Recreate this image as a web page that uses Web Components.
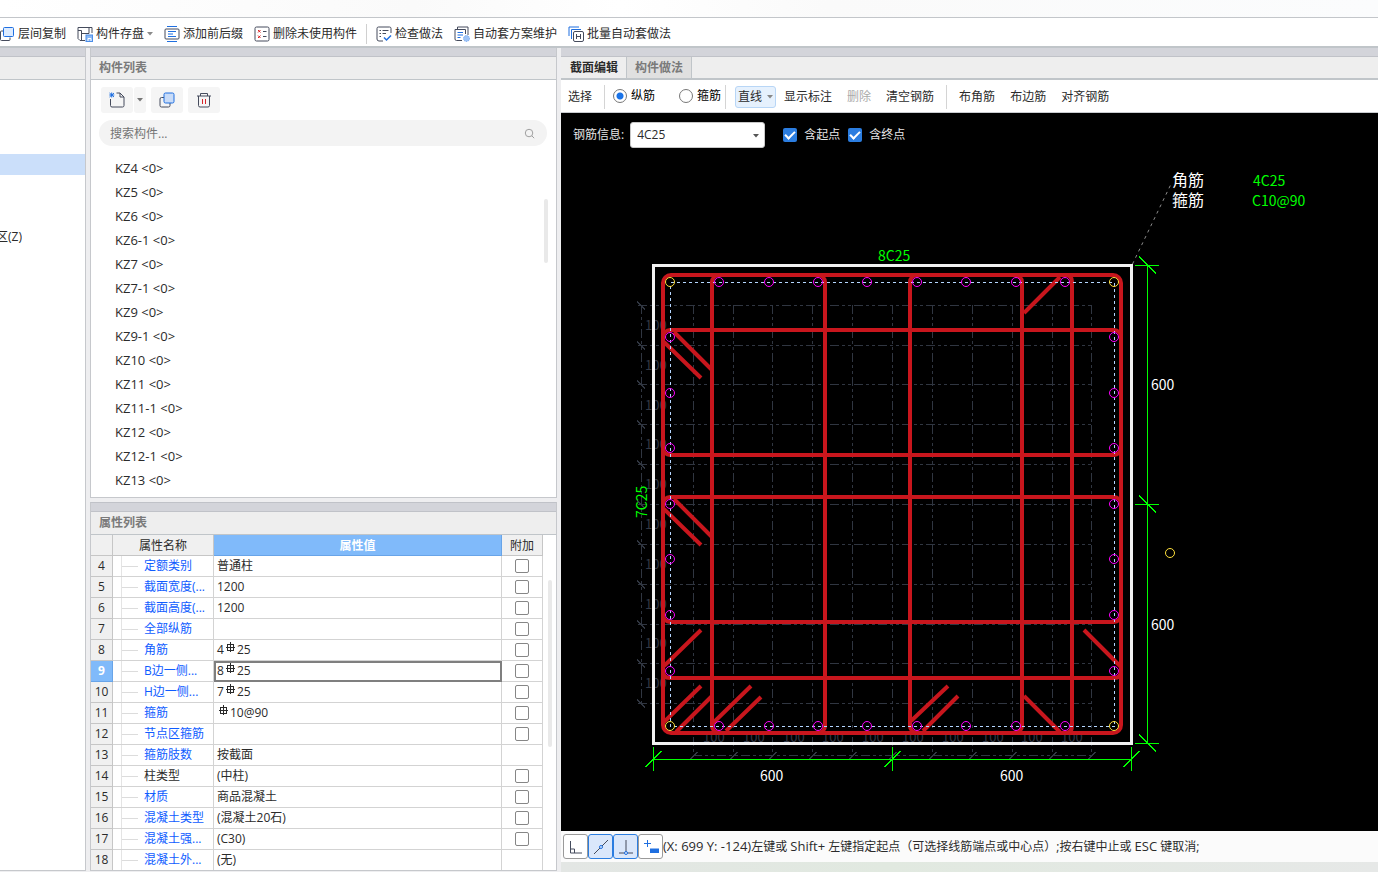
<!DOCTYPE html>
<html lang="zh-CN">
<head>
<meta charset="utf-8">
<title>构件定义</title>
<style>
  html, body {
    margin: 0;
    height: 100%;
  }
  body {
    font: 12px/16px "Open Sans", "Noto Sans CJK SC", sans-serif;
    color: #2b2b2b;
    background: #eeeef0;
    overflow: hidden;
  }
</style>
</head>
<body>
<define-window></define-window>

<script>
  // styles shared by every shadow root
  const base = `
    * { box-sizing: border-box; }
    button, input, select {
      font: inherit;
      color: inherit;
      margin: 0;
      padding: 0;
      border: 0;
      background: none;
    }
    button { white-space: nowrap; }
    svg { display: block; flex: none; }
  `;

  const BLUE = '#1f6fe0';
  const DARK = '#454b5c';

  const icons = {
    layers: `<path d="M4.5 5H2.500Q1.500 5 1.500 6V13.500Q1.500 14.500 2.500 14.500H10Q11 14.500 11 13.500V11.500" stroke="${DARK}"/><rect x="4.500" y="1.500" width="10" height="9" rx="1" fill="#dcebff" stroke="${BLUE}"/>`,
    save: `<path d="M8 14.500H3L1 12.500V1.500H15V7M4.500 14V4.500M4.500 7.500H12M12 1.500V7.500M1 4.500H4.500" stroke="${DARK}"/><rect x="9" y="9" width="6.500" height="6.500" fill="#8ab8f5" stroke="#4c8ee8"/><path d="M11 15V12.500H14V15" stroke="#fff"/>`,
    affix: `<path d="M3 .5H13M3 15.500H13" stroke="${BLUE}"/><rect x="1" y="3" width="14" height="10" rx="1" stroke="${DARK}"/><path d="M4 5.500H12M4 8H9M4 10.500H12" stroke="${BLUE}"/>`,
    unused: `<rect x="1" y="1" width="14" height="14" rx="1.500" stroke="${DARK}"/><path d="M4 4L6.500 6.500M6.500 4L4 6.500M4 9.500L6.500 12M6.500 9.500L4 12" stroke="#d22"/><path d="M9 5.500H12.500M9 10.500H12.500" stroke="${DARK}"/>`,
    check: `<path d="M7 15H3Q1 15 1 13V2.500Q1 1 2.500 1H13.500Q15 1 15 2.500V7M3.500 4.500H5M6.500 4.500H12.500M3.500 7.500H5M6.500 7.500H10M3.500 10.500H5" stroke="${DARK}"/><path d="M8 11.500L10.500 14L15 9.500" stroke="${BLUE}" stroke-width="1.500"/>`,
    scheme: `<path d="M3.500 3V1H14V9M8 14.500H2.500Q1 14.500 1 13V3.500H11.500V8" stroke="${DARK}"/><path d="M3.500 6.500H9M3.500 9H9M3.500 11.500H6.500" stroke="${BLUE}"/><circle cx="12.500" cy="12.500" r="3" fill="#9dc3f7" stroke="#6aa2ee" stroke-dasharray="1 1"/>`,
    batch: `<path d="M1 10V1H11M3.500 13V3.500H13" stroke="${BLUE}"/><rect x="5.500" y="5.500" width="10" height="10" rx="1.500" fill="#fff" stroke="${DARK}"/><path d="M8.500 8V13M12.500 8V13M8.500 10.500H12.500" stroke="${DARK}"/>`,
    create: `<path d="M1.500 7V13.500Q1.500 15 3 15H13.500Q15 15 15 13.500V5L11 1H7.500M11 1V5H15" stroke="${DARK}"/><path d="M.5 1L5 5M5 1L.5 5M2.700 .5V5.500M.3 3H5.300" stroke="${BLUE}"/>`,
    copy: `<path d="M5 5.500H2.500Q1 5.500 1 7V13.500Q1 15 2.500 15H9.500Q11 15 11 13.500V11" stroke="${DARK}"/><rect x="5" y="1" width="10" height="10" rx="1.500" fill="#c9dcf8" stroke="${BLUE}"/>`,
    trash: `<path d="M1 4H15M4.500 4V1.500H11.500V4M2.500 4V13.500Q2.500 15 4 15H12Q13.500 15 13.500 13.500V4" stroke="${DARK}"/><path d="M6.500 7V12M9.500 7V12" stroke="#d8232a"/>`,
    search: `<circle cx="7.500" cy="7.500" r="4" stroke="#999"/><path d="M10.500 10.500L13 13" stroke="#999"/>`,
    angle: `<path d="M2.500 2V14H14M2.500 10H6.500V14" stroke="${DARK}"/>`,
    line: `<path d="M1 15L15 1" stroke="${DARK}"/><circle cx="8" cy="8" r="1.500" fill="#dcebff" stroke="${BLUE}"/>`,
    perp: `<path d="M8 1V13M1 14H15" stroke="${DARK}"/><circle cx="8" cy="14" r="1.500" fill="#dcebff" stroke="${BLUE}"/>`,
    dynamic: `<path d="M1 4.500H8M4.500 1V8" stroke="${BLUE}"/><path d="M7 9.500H16V14H7Z" fill="${BLUE}"/>`
  };

  function icon(name, size = 16) {
    return `<svg width="${size}" height="${size}" viewBox="0 0 16 16" fill="none" aria-hidden="true">${icons[name]}</svg>`;
  }

  const caret = '<svg class="caret" width="6" height="4" viewBox="0 0 6 4" aria-hidden="true"><path d="M0 0H6L3 3.500Z" fill="currentColor"/></svg>';

  function range(n) {
    return Array.from({length: n}, (v, i) => i);
  }

  class BaseElement extends HTMLElement {
    constructor() {
      super();
      this.attachShadow({mode: 'open'});
    }

    connectedCallback() {
      const template = document.createElement('template');
      template.innerHTML = `<style>${base}</style>` + this.render();
      this.shadowRoot.replaceChildren(template.content.cloneNode(true));
    }
  }


  class ToolItem extends BaseElement {
    render() {
      return `
        <style>
          :host { display: block; flex: none; }
          button { display: flex; align-items: center; gap: 3px; height: 24px; }
          .caret { color: #8a8a8a; }
        </style>
        <button type="button">
          ${icon(this.getAttribute('icon'))}
          <slot></slot>
          ${this.hasAttribute('menu') ? caret : ''}
        </button>
      `;
    }
  }


  class MainToolbar extends BaseElement {
    render() {
      return `
        <style>
          :host {
            display: flex;
            align-items: center;
            gap: 11px;
            height: 31px;
            padding-top: 3px;
            border-top: 1px solid #c3c6ca;
            border-bottom: 2px solid #c0c5c9;
            background: #fff;
            overflow: hidden;
          }
          .first { margin-left: -1px; }
          i { width: 1px; height: 20px; margin: 0 -2px; background: #d0d0d0; }
        </style>
        <tool-item class="first" icon="layers">层间复制</tool-item>
        <tool-item icon="save" menu>构件存盘</tool-item>
        <tool-item icon="affix">添加前后缀</tool-item>
        <tool-item icon="unused">删除未使用构件</tool-item>
        <i></i>
        <tool-item icon="check">检查做法</tool-item>
        <tool-item icon="scheme">自动套方案维护</tool-item>
        <tool-item icon="batch">批量自动套做法</tool-item>
      `;
    }
  }


  class DockPanel extends BaseElement {
    render() {
      return `
        <style>
          :host {
            display: flex;
            flex-direction: column;
            min-height: 0;
            border: 1px solid #c6c8cc;
            border-top: 0;
            background: #fff;
          }
          .grip { height: 9px; background: #d3d4da; border-bottom: 1px solid #c0c2c8; }
          header {
            height: 23px;
            padding: 3px 8px;
            border-bottom: 1px solid #c0c5c9;
            background: #eee;
            color: #7a7a7a;
            font-weight: bold;
          }
          .body { flex: 1; display: flex; flex-direction: column; min-height: 0; }
        </style>
        <div class="grip"></div>
        <header>${this.getAttribute('heading') || ''}</header>
        <div class="body"><slot></slot></div>
      `;
    }
  }


  class ModuleTree extends BaseElement {
    render() {
      return `
        <style>
          :host { display: block; padding-top: 74px; }
          a {
            display: flex;
            align-items: center;
            height: 21px;
            margin-bottom: 3px;
            color: inherit;
            text-decoration: none;
            white-space: nowrap;
          }
          a.current { background: #cbdffa; }
          span { width: 22px; display: flex; justify-content: flex-end; overflow: hidden; }
        </style>
        <a class="current" href="#" aria-label="柱"></a>
        <a href="#" aria-label="构件"></a>
        <a href="#" aria-label="构件"></a>
        <a href="#"><span>区(Z)</span></a>
      `;
    }
  }


  class ComponentList extends BaseElement {
    render() {
      const names = ['KZ4', 'KZ5', 'KZ6', 'KZ6-1', 'KZ7', 'KZ7-1', 'KZ9', 'KZ9-1',
        'KZ10', 'KZ11', 'KZ11-1', 'KZ12', 'KZ12-1', 'KZ13'];
      return `
        <style>
          :host { display: flex; flex-direction: column; flex: 1; min-height: 0; padding: 7px 9px 0 8px; position: relative; }
          .tools { display: flex; padding-left: 2px; margin-bottom: 7px; }
          .tools button {
            display: flex;
            align-items: center;
            justify-content: center;
            width: 32px;
            height: 26px;
            margin-right: 5px;
            border-radius: 3px;
            background: #f5f5f5;
          }
          .tools .new { margin-right: 1px; }
          .tools .more { width: 12px; color: #777; }
          .search {
            display: flex;
            align-items: center;
            height: 26px;
            padding: 0 10px 0 11px;
            border-radius: 13px;
            background: #f3f3f3;
          }
          .search input { flex: 1; min-width: 0; padding-top: 2px; outline: 0; }
          .search input::placeholder { color: #757575; opacity: 1; }
          ul { flex: 1; margin: 10px 0 0; padding: 0; list-style: none; overflow: hidden; }
          li { padding: 4px 16px; height: 24px; font-size: 13px; }
          .thumb { position: absolute; right: 8px; top: 119px; width: 4px; height: 64px; border-radius: 2px; background: #e9e9e9; }
        </style>
        <div class="tools">
          <button class="new" type="button" aria-label="新建">${icon('create')}</button>
          <button class="more" type="button" aria-label="新建选项">${caret}</button>
          <button type="button" aria-label="复制">${icon('copy')}</button>
          <button type="button" aria-label="删除">${icon('trash')}</button>
        </div>
        <label class="search">
          <input type="text" placeholder="搜索构件..." aria-label="搜索构件">
          ${icon('search', 15)}
        </label>
        <ul>${names.map(name => `<li>${name} &lt;0&gt;</li>`).join('')}</ul>
        <div class="thumb"></div>
      `;
    }
  }


  // HRB400 bar mark, drawn since no installed font has it
  const bar = `<svg class="bar" width="11" height="11" viewBox="0 0 11 11" fill="none" stroke="#2b2b2b" aria-hidden="true">
    <path d="M5.500 0V10M2 2.500H9M1 5.500H10M2 8.500H9M2.500 2.500V8M8.500 2.500V8"/></svg>`;

  const properties = [
    [4, '定额类别', '普通柱'],
    [5, '截面宽度(...', '1200'],
    [6, '截面高度(...', '1200'],
    [7, '全部纵筋', ''],
    [8, '角筋', `4${bar}25`],
    [9, 'B边一侧...', `8${bar}25`],
    [10, 'H边一侧...', `7${bar}25`],
    [11, '箍筋', `${bar}10@90`],
    [12, '节点区箍筋', ''],
    [13, '箍筋肢数', '按截面'],
    [14, '柱类型', '(中柱)'],
    [15, '材质', '商品混凝土'],
    [16, '混凝土类型', '(混凝土20石)'],
    [17, '混凝土强...', '(C30)'],
    [18, '混凝土外...', '(无)']
  ];

  class PropertyTable extends BaseElement {
    row([no, name, value]) {
      const noCheck = no === 13 || no === 18;
      const id = `add-${no}`;
      return `
        <tr class="${no === 9 ? 'active' : ''}">
          <th scope="row">${no}</th>
          <td class="name ${no === 14 ? 'plain' : ''}"><span>${name}</span></td>
          <td class="value">${value}</td>
          <td class="add">${noCheck ? '' : `<input type="checkbox" id="${id}" aria-label="附加 ${name}">`}</td>
        </tr>
      `;
    }

    render() {
      return `
        <style>
          :host { display: block; padding-right: 13px; position: relative; overflow: hidden; flex: 1; }
          table { width: 100%; table-layout: fixed; border-collapse: separate; border-spacing: 0; }
          col.no { width: 22px; }
          col.name { width: 101px; }
          col.add { width: 41px; }
          th, td {
            height: 21px;
            padding: 0;
            border-right: 1px solid #d3d3d3;
            border-bottom: 1px solid #d3d3d3;
            font-weight: normal;
            text-align: left;
            white-space: nowrap;
            overflow: hidden;
          }
          th { background: #f0f0f0; text-align: center; border-color: #c6c6c6; }
          thead th { padding-top: 1px; }
          thead th.value { background: #80bafa; color: #fff; font-weight: bold; border-color: #68a4e8; }
          td.name { padding-left: 8px; color: #0f5cff; }
          td.name span {
            display: flex;
            align-items: center;
            gap: 6px;
            height: 20px;
            border-left: 1px solid #e4e4e4;
          }
          td.name span::before { content: ""; width: 16px; height: 1px; background: #dcdcdc; }
          td.plain { color: #2b2b2b; }
          td.value { padding-left: 3px; }
          .bar { display: inline-block; vertical-align: 1px; margin: 0 1px; }
          .active th { background: #80bafa; color: #fff; font-weight: bold; border-color: #68a4e8; }
          .active td.value { outline: 2px solid #7f7f7f; outline-offset: -2px; }
          td.add { text-align: center; }
          td.add input {
            display: block;
            appearance: none;
            width: 14px;
            height: 14px;
            margin: 0 auto;
            border: 1px solid #868686;
            border-radius: 2px;
            background: #fff;
          }
          .thumb { position: absolute; right: 4px; top: 45px; width: 4px; height: 167px; border-radius: 2px; background: #e9e9e9; }
        </style>
        <table>
          <colgroup><col class="no"><col class="name"><col><col class="add"></colgroup>
          <thead>
            <tr><th></th><th scope="col">属性名称</th><th class="value" scope="col">属性值</th><th scope="col">附加</th></tr>
          </thead>
          <tbody>${properties.map(this.row).join('')}</tbody>
        </table>
        <div class="thumb"></div>
      `;
    }
  }


  class SectionToolbar extends BaseElement {
    render() {
      return `
        <style>
          :host {
            display: flex;
            align-items: center;
            gap: 15px;
            height: 33px;
            padding: 2px 7px 0;
            border-bottom: 1px solid #c9ccd0;
            background: #fff;
          }
          i { width: 1px; height: 24px; margin: 0 -3px; background: #d4d4d4; }
          .types { display: flex; gap: 24px; margin: 0 -8px 0 -4px; padding-bottom: 2px; color: #000; }
          label { display: flex; align-items: center; gap: 4px; }
          input {
            appearance: none;
            width: 14px;
            height: 14px;
            border: 1px solid #777;
            border-radius: 50%;
            background: #fff;
          }
          input:checked { background: radial-gradient(#1a73e8 3px, #fff 4px); }
          .drop {
            display: flex;
            align-items: center;
            gap: 5px;
            height: 22px;
            padding: 0 2px;
            margin: 0 -7px 0 -3px;
            border: 1px solid #b8d6f6;
            border-radius: 3px;
            background: #e6f1fd;
          }
          .caret { color: #888; }
          button:disabled { color: #aaa; }
        </style>
        <button type="button">选择</button>
        <i></i>
        <div class="types">
          <label><input type="radio" name="type" checked>纵筋</label>
          <label><input type="radio" name="type">箍筋</label>
        </div>
        <i></i>
        <button class="drop" type="button">直线${caret}</button>
        <button type="button">显示标注</button>
        <button type="button" disabled>删除</button>
        <button type="button">清空钢筋</button>
        <i></i>
        <button type="button">布角筋</button>
        <button type="button">布边筋</button>
        <button type="button">对齐钢筋</button>
      `;
    }
  }


  class BarOptions extends BaseElement {
    render() {
      return `
        <style>
          :host {
            display: flex;
            align-items: center;
            height: 44px;
            padding-left: 12px;
            color: #e6e6e6;
          }
          .field { position: relative; margin: 0 18px 0 6px; color: #2b2b2b; }
          select {
            appearance: none;
            display: block;
            width: 135px;
            height: 26px;
            padding: 0 6px;
            border: 1px solid #c8c8c8;
            border-radius: 3px;
            background: #fff;
          }
          .caret { position: absolute; right: 6px; top: 12px; color: #555; }
          .check { display: flex; align-items: center; gap: 7px; margin-right: 8px; }
          .check input {
            appearance: none;
            display: grid;
            place-items: center;
            width: 14px;
            height: 14px;
            border-radius: 2px;
            background: #2b7de0;
          }
          .check input::before {
            content: "";
            width: 8px;
            height: 4px;
            margin-bottom: 3px;
            border: solid #fff;
            border-width: 0 0 2px 2px;
            transform: rotate(-45deg);
          }
        </style>
        <label for="bar-info">钢筋信息:</label>
        <div class="field">
          <select id="bar-info"><option>4C25</option></select>
          ${caret}
        </div>
        <label class="check"><input type="checkbox" checked>含起点</label>
        <label class="check"><input type="checkbox" checked>含终点</label>
      `;
    }
  }


  class SectionDrawing extends BaseElement {
    render() {
      const xs = [693.5, 733.5, 772.5, 812.5, 852.5, 892.5, 932.5, 972.5, 1012.5, 1052.5, 1091.5];
      const ys = [305.5, 345.5, 384.5, 424.5, 464.5, 504.5, 544.5, 584.5, 624.5, 663.5, 703.5];
      const barX = [719, 769, 818, 867, 917, 966, 1016, 1065];
      const barY = [337, 393, 448, 504, 559, 615, 671];
      const circle = (x, y) => `<circle cx="${x}" cy="${y}" r="4.500"/>`;

      const grid = xs.map(x => `M${x} 305V757`).join('') + ys.map(y => `M638 ${y}H1092`).join('');
      const ticks = xs.map(x => `M${x - 4} 760l8 -8`).join('') + ys.map(y => `M637 ${y - 4}l8 8`).join('');
      const small = range(10).map(i =>
        `<text x="645" y="${330 + Math.round(i * 39.8)}">100</text>` +
        `<text x="${703 + Math.round(i * 39.8)}" y="742">100</text>`).join('');

      return `
        <style>
          :host { display: block; flex: 1; min-height: 0; }
          svg { width: 100%; height: 100%; }
          text { font: 14px "Noto Sans CJK SC", sans-serif; }
          .cjk { font: 16px "Liberation Sans", "Noto Sans CJK SC", sans-serif; }
          .small { font-size: 13px; }
          .small text { font-size: inherit; }
        </style>
        <svg viewBox="561 157 817 674" preserveAspectRatio="xMinYMin meet" fill="none" role="img" aria-label="柱截面配筋图">
          <g shape-rendering="crispEdges">
            <path d="${grid}M641.500 305V704M693 755.500H1092" stroke="#303641" stroke-dasharray="9 3 3 3 3 3"/>
            <path d="${ticks}" stroke="#303641"/>
          </g>
          <g class="small" fill="#343945">${small}</g>
          <path d="M653.500 265.500H1131.500V743.500H653.500Z" stroke="#f2f2f2" stroke-width="3"/>

          <!-- stirrups -->
          <g stroke="#c8161d" stroke-width="4">
            <rect x="663" y="275" width="458" height="458" rx="8"/>
            <rect x="712" y="275" width="113" height="458" rx="7"/>
            <rect x="910" y="275" width="112" height="458" rx="7"/>
            <rect x="663" y="330" width="458" height="125" rx="7"/>
            <rect x="663" y="497" width="458" height="125" rx="7"/>
            <path d="M1060 275H1065Q1072 275 1072 282V726Q1072 733 1065 733H1060"/>
            <path d="M663 668V671Q663 678 670 678H1114Q1121 678 1121 671V668"/>
            <path d="M1024 313L1060 277M664 342L701 378M674 332L712 370M664 509L701 545M674 499L712 537
              M664 666L701 630M664 722L701 686M676 732L712 696M713 723L751 686M726 731L761 697
              M911 721L948 686M923 731L958 696M1024 696L1060 732M1084 630L1121 667"/>
          </g>

          <path d="M670.500 282.500H1114.500V726.500H670.500Z" stroke="#b4d6ff" stroke-dasharray="3 3" shape-rendering="crispEdges"/>
          <g stroke="#ff00ff">
            ${barX.map(x => circle(x, 282) + circle(x, 726)).join('')}
            ${barY.map(y => circle(670, y) + circle(1114, y)).join('')}
          </g>
          <g stroke="#ffe03c">
            ${circle(670, 282)}${circle(1114, 282)}${circle(670, 726)}${circle(1114, 726)}${circle(1170, 553)}
          </g>

          <!-- dimensions -->
          <g stroke="#00ff00" shape-rendering="crispEdges">
            <path d="M653.500 759.500H1131.500M1147.500 265.500V743.500"/>
            ${[653.5, 892.5, 1131.5].map(x => `<path d="M${x} 747V771M${x - 8} 767l16 -16"/>`).join('')}
            ${[265.5, 504.5, 743.5].map(y => `<path d="M1135 ${y}H1159M1139 ${y - 9}l17 17"/>`).join('')}
          </g>
          <path d="M1132.500 264L1172 182" stroke="#8c8c8c" stroke-dasharray="3 4"/>
          <g fill="#fff">
            <text x="760" y="781">600</text>
            <text x="1000" y="781">600</text>
            <text x="1151" y="390">600</text>
            <text x="1151" y="630">600</text>
            <text class="cjk" x="1172" y="186">角筋</text>
            <text class="cjk" x="1172" y="206">箍筋</text>
          </g>
          <g fill="#00ff00">
            <text x="878" y="261">8C25</text>
            <text transform="translate(647 518) rotate(-90)">7C25</text>
            <text x="1253" y="186">4C25</text>
            <text x="1252" y="206">C10@90</text>
          </g>
        </svg>
      `;
    }
  }


  class StatusBar extends BaseElement {
    render() {
      return `
        <style>
          :host {
            display: flex;
            align-items: center;
            height: 31px;
            padding-left: 2px;
            background: #fbfbfb;
            white-space: nowrap;
            overflow: hidden;
          }
          button {
            display: grid;
            place-items: center;
            flex: none;
            width: 25px;
            height: 25px;
            border: 1px solid #9a9a9a;
            border-radius: 3px;
            background: #fff;
          }
          button[aria-pressed="true"] { border-color: #2b7de0; background: #dae7fb; }
          output, kbd { font: inherit; font-size: 13px; }
        </style>
        <button type="button" aria-label="正交">${icon('angle')}</button>
        <button type="button" aria-label="最近点" aria-pressed="true">${icon('line')}</button>
        <button type="button" aria-label="垂点" aria-pressed="true">${icon('perp')}</button>
        <button type="button" aria-label="动态输入">${icon('dynamic')}</button>
        <span><output>(X: 699 Y: -124)</output>左键或 <kbd>Shift+</kbd> 左键指定起点（可选择线筋端点或中心点）;按右键中止或 <kbd>ESC</kbd> 键取消;</span>
      `;
    }
  }


  class SectionEditor extends BaseElement {
    render() {
      return `
        <style>
          :host { display: flex; flex-direction: column; min-width: 0; }
          .grip { height: 9px; background: #d3d4da; border-bottom: 1px solid #c0c2c8; }
          .tabs { display: flex; height: 23px; background: #eee; border-bottom: 2px solid #c0c5c9; }
          .tabs button {
            padding: 0 8px;
            border-right: 1px solid #c0c5c9;
            background: #e0e0e0;
            color: #7a7a7a;
            font-weight: bold;
          }
          .tabs button[aria-selected="true"] { padding-left: 9px; background: #eee; color: #2b2b2b; }
          .canvas { flex: 1; display: flex; flex-direction: column; min-height: 0; background: #000; }
          .foot { height: 10px; background: linear-gradient(90deg, #e3e6e4, #e1e9e0 40%, #e6e8e7); }
        </style>
        <div class="grip"></div>
        <div class="tabs" role="tablist">
          <button type="button" role="tab" aria-selected="true">截面编辑</button>
          <button type="button" role="tab" aria-selected="false">构件做法</button>
        </div>
        <section-toolbar></section-toolbar>
        <div class="canvas">
          <bar-options></bar-options>
          <section-drawing></section-drawing>
        </div>
        <status-bar></status-bar>
        <div class="foot"></div>
      `;
    }
  }


  class DefineWindow extends BaseElement {
    render() {
      return `
        <style>
          :host { display: flex; flex-direction: column; height: 100vh; }
          .title { height: 17px; background: linear-gradient(90deg, #fff, #fafafa 30%, #fff 45%, #fafafa 60%, #fbfcfd); }
          main { flex: 1; display: flex; min-height: 0; }
          .left { width: 86px; border-left: 0; margin: 0 4px 1px 0; }
          .middle { width: 467px; display: flex; flex-direction: column; margin: 0 4px 1px 0; }
          .list { flex: 1; margin-bottom: 4px; }
          .props { height: 369px; border-top: 1px solid #c0c2c8; }
          section-editor { flex: 1; }
        </style>
        <div class="title"></div>
        <main-toolbar></main-toolbar>
        <main>
          <dock-panel class="left"><module-tree></module-tree></dock-panel>
          <div class="middle">
            <dock-panel class="list" heading="构件列表"><component-list></component-list></dock-panel>
            <dock-panel class="props" heading="属性列表"><property-table></property-table></dock-panel>
          </div>
          <section-editor></section-editor>
        </main>
      `;
    }
  }

  window.customElements.define('tool-item', ToolItem);
  window.customElements.define('main-toolbar', MainToolbar);
  window.customElements.define('dock-panel', DockPanel);
  window.customElements.define('module-tree', ModuleTree);
  window.customElements.define('component-list', ComponentList);
  window.customElements.define('property-table', PropertyTable);
  window.customElements.define('section-toolbar', SectionToolbar);
  window.customElements.define('bar-options', BarOptions);
  window.customElements.define('section-drawing', SectionDrawing);
  window.customElements.define('status-bar', StatusBar);
  window.customElements.define('section-editor', SectionEditor);
  window.customElements.define('define-window', DefineWindow);
</script>
</body>
</html>
